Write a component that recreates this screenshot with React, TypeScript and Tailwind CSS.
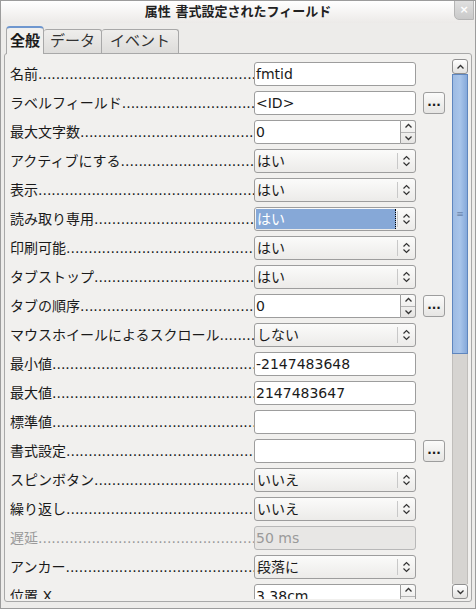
type Row = {
  label: string;
  kind: "text" | "spin" | "select" | "disabled";
  value: string;
  button?: boolean;
  selected?: boolean;
  disabled?: boolean;
};

const rows: Row[] = [
  { label: "名前", kind: "text", value: "fmtid" },
  { label: "ラベルフィールド", kind: "text", value: "<ID>", button: true },
  { label: "最大文字数", kind: "spin", value: "0" },
  { label: "アクティブにする", kind: "select", value: "はい" },
  { label: "表示", kind: "select", value: "はい" },
  { label: "読み取り専用", kind: "select", value: "はい", selected: true },
  { label: "印刷可能", kind: "select", value: "はい" },
  { label: "タブストップ", kind: "select", value: "はい" },
  { label: "タブの順序", kind: "spin", value: "0", button: true },
  { label: "マウスホイールによるスクロール", kind: "select", value: "しない" },
  { label: "最小値", kind: "text", value: "-2147483648" },
  { label: "最大値", kind: "text", value: "2147483647" },
  { label: "標準値", kind: "text", value: "" },
  { label: "書式設定", kind: "text", value: "", button: true },
  { label: "スピンボタン", kind: "select", value: "いいえ" },
  { label: "繰り返し", kind: "select", value: "いいえ" },
  { label: "遅延", kind: "disabled", value: "50 ms", disabled: true },
  { label: "アンカー", kind: "select", value: "段落に" },
  { label: "位置 X", kind: "spin", value: "3.38cm" },
];

const dots = ".".repeat(120);

function Chevrons() {
  return (
    <svg width="9" height="14" viewBox="0 0 9 14" fill="none" stroke="#333" strokeWidth="1.2">
      <path d="M1.5 5.5 L4.5 2.5 L7.5 5.5" />
      <path d="M1.5 8.5 L4.5 11.5 L7.5 8.5" />
    </svg>
  );
}

function Up() {
  return (
    <svg width="9" height="6" viewBox="0 0 9 6" fill="none" stroke="#333" strokeWidth="1.3">
      <path d="M1.5 4.5 L4.5 1.5 L7.5 4.5" />
    </svg>
  );
}

function Down() {
  return (
    <svg width="9" height="6" viewBox="0 0 9 6" fill="none" stroke="#333" strokeWidth="1.3">
      <path d="M1.5 1.5 L4.5 4.5 L7.5 1.5" />
    </svg>
  );
}

function Field({ row }: { row: Row }) {
  if (row.kind === "select") {
    return (
      <div className="w-[162px] h-[24px] flex items-stretch border border-[#9d9d9d] rounded-[3px] bg-gradient-to-b from-[#fbfbfa] to-[#ecebe9]">
        <div className="flex-1 p-[1px] flex">
          <div
            className={
              row.selected
                ? "flex-1 flex items-center pl-[1px] bg-[#86a8d7] text-white border-r border-dotted border-black"
                : "flex-1 flex items-center pl-[1px]"
            }
          >
            {row.value}
          </div>
        </div>
        <div className="w-[18px] flex items-center justify-center border-l border-[#c8c8c8] my-[3px]">
          <Chevrons />
        </div>
      </div>
    );
  }
  if (row.kind === "spin") {
    return (
      <div className="w-[162px] h-[24px] flex">
        <div className="flex-1 flex items-center pl-[1px] bg-white border border-[#9d9d9d] rounded-l-[3px]">
          {row.value}
        </div>
        <div className="w-[15px] flex flex-col border border-l-0 border-[#9d9d9d] rounded-r-[3px] bg-gradient-to-b from-[#fbfbfa] to-[#e6e5e3]">
          <div className="flex-1 flex items-center justify-center border-b border-[#b5b5b5]">
            <Up />
          </div>
          <div className="flex-1 flex items-center justify-center">
            <Down />
          </div>
        </div>
      </div>
    );
  }
  if (row.kind === "disabled") {
    return (
      <div className="w-[162px] h-[24px] flex items-center pl-[1px] border border-[#b8b8b8] rounded-[3px] bg-[#e8e7e5] text-[#9a9a9a]">
        {row.value}
      </div>
    );
  }
  return (
    <div className="w-[162px] h-[24px] flex items-center pl-[1px] bg-white border border-[#9d9d9d] rounded-[3px]">
      {row.value}
    </div>
  );
}

export default function App() {
  return (
    <div className="w-[476px] h-[609px] flex flex-col overflow-hidden bg-[#edecea] border border-[#9c9c9c] font-['DejaVu_Sans','Noto_Sans_CJK_JP',sans-serif] text-[14px] text-[#1a1a1a]">
      <div className="relative h-[22px] shrink-0 flex items-center justify-center bg-gradient-to-b from-white to-[#eceae8]">
        <span className="font-bold text-[13px] text-[#222]">属性 書式設定されたフィールド</span>
        <div className="absolute top-[-1px] right-[1px] w-[20px] h-[20px] bg-gradient-to-b from-[#e0e0e0] to-[#c9c9c9] border border-[#b5b5b5] rounded-bl-[5px] flex items-center justify-center text-white text-[11px] font-bold">
          ×
        </div>
      </div>

      <div className="h-[30px] shrink-0 flex items-end pl-[5px] text-[15px]">
        <div className="h-[28px] px-[3px] flex items-center bg-[#f1f0ee] border border-b-0 border-[#a8a8a8] border-t-[2px] border-t-[#6f97cf] rounded-t-[4px] font-bold relative top-[1px] z-10">
          全般
        </div>
        <div className="h-[24px] px-[6px] flex items-center bg-gradient-to-b from-[#efeeec] to-[#dddcda] border border-b-0 border-l-0 border-[#a8a8a8] rounded-t-[3px] text-[#333]">
          データ
        </div>
        <div className="h-[24px] px-[8px] flex items-center bg-gradient-to-b from-[#efeeec] to-[#dddcda] border border-b-0 border-l-0 border-[#a8a8a8] rounded-t-[3px] text-[#333]">
          イベント
        </div>
      </div>

      <div className="flex-1 mx-[3px] mb-[6px] flex overflow-hidden border border-[#a8a8a8] rounded-[3px] bg-[#f1f0ee]">
        <div className="flex-1 mb-[2px] flex flex-col gap-[5px] pt-[8px] pl-[5px] overflow-hidden">
          {rows.map((row) => (
            <div key={row.label} className="h-[24px] shrink-0 flex items-center">
              <div
                className={
                  "w-[244px] flex whitespace-nowrap overflow-hidden " +
                  (row.disabled ? "text-[#9a9a9a]" : "")
                }
              >
                <span>{row.label}</span>
                <span className="flex-1 overflow-hidden">{dots}</span>
              </div>
              <Field row={row} />
              {row.button && (
                <div className="ml-[7px] w-[22px] h-[22px] flex items-center justify-center border border-[#9d9d9d] rounded-[3px] bg-gradient-to-b from-[#fbfbfa] to-[#e6e5e3] text-[12px] font-bold leading-none pb-[3px]">
                  ...
                </div>
              )}
            </div>
          ))}
        </div>

        <div className="w-[16px] mr-[3px] mt-[5px] mb-[2px] flex flex-col">
          <div className="h-[15px] shrink-0 flex items-center justify-center border border-[#8f8f8f] rounded-[3px] bg-gradient-to-b from-white to-[#e2e1df]">
            <Up />
          </div>
          <div className="h-[280px] shrink-0 flex items-center justify-center border border-[#5f86be] bg-gradient-to-r from-[#9dbbe3] via-[#a9c5ea] to-[#86a9da]">
            <span className="text-[#6a86ad] text-[9px] leading-none">≡</span>
          </div>
          <div className="flex-1 bg-[#d6d4d1] border-x border-[#c0bebb]"></div>
          <div className="h-[15px] shrink-0 flex items-center justify-center border border-[#8f8f8f] rounded-[3px] bg-gradient-to-b from-white to-[#e2e1df]">
            <Down />
          </div>
        </div>
      </div>
    </div>
  );
}
